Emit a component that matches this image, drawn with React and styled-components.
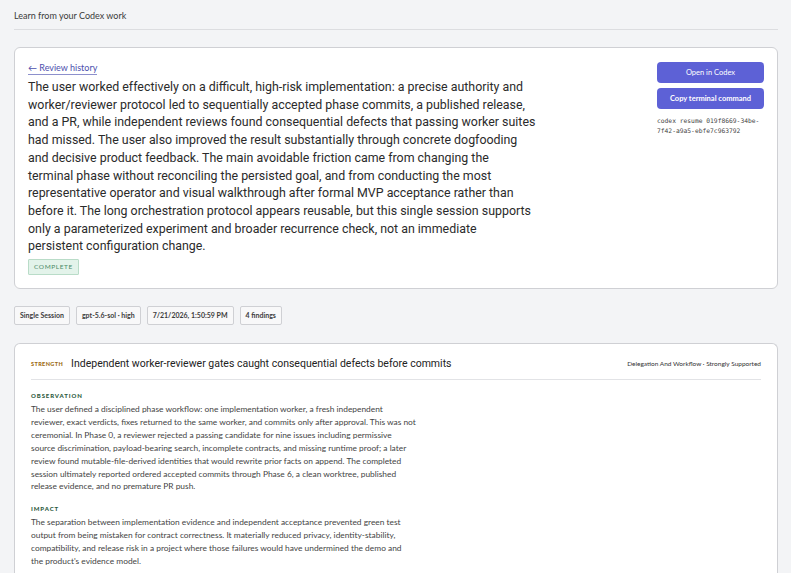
import React from 'react';
import styled, { createGlobalStyle } from 'styled-components';

const GlobalStyle = createGlobalStyle`
  html, body {
    margin: 0;
    padding: 0;
    background: #f3f4f6;
  }
  body {
    font-family: Lato, 'Noto Sans', sans-serif;
    color: #333;
  }
`;

const summaryLines = [
  'The user worked effectively on a difficult, high-risk implementation: a precise authority and',
  'worker/reviewer protocol led to sequentially accepted phase commits, a published release,',
  'and a PR, while independent reviews found consequential defects that passing worker suites',
  'had missed. The user also improved the result substantially through concrete dogfooding',
  'and decisive product feedback. The main avoidable friction came from changing the',
  'terminal phase without reconciling the persisted goal, and from conducting the most',
  'representative operator and visual walkthrough after formal MVP acceptance rather than',
  'before it. The long orchestration protocol appears reusable, but this single session supports',
  'only a parameterized experiment and broader recurrence check, not an immediate',
  'persistent configuration change.',
];

const observationLines = [
  'The user defined a disciplined phase workflow: one implementation worker, a fresh independent',
  'reviewer, exact verdicts, fixes returned to the same worker, and commits only after approval. This was not',
  'ceremonial. In Phase 0, a reviewer rejected a passing candidate for nine issues including permissive',
  'source discrimination, payload-bearing search, incomplete contracts, and missing runtime proof; a later',
  'review found mutable-file-derived identities that would rewrite prior facts on append. The completed',
  'session ultimately reported ordered accepted commits through Phase 6, a clean worktree, published',
  'release evidence, and no premature PR push.',
];

const impactLines = [
  'The separation between implementation evidence and independent acceptance prevented green test',
  'output from being mistaken for contract correctness. It materially reduced privacy, identity-stability,',
  'compatibility, and release risk in a project where those failures would have undermined the demo and',
  "the product's evidence model.",
];

const tags = ['Single Session', 'gpt-5.6-sol · high', '7/21/2026, 1:50:59 PM', '4 findings'];

const Page = styled.div`
  padding: 8px 13px 0 14px;
`;

const PageHeader = styled.div`
  font-size: 9px;
  line-height: 13px;
  color: #3a3a3a;
  padding: 1px 0 7px;
  border-bottom: 1px solid #dcdde0;
  margin-bottom: 17px;
`;

const Card = styled.section`
  background: #fff;
  border: 1px solid #cfd0d4;
  border-radius: 6px;
`;

const SummaryCard = styled(Card)`
  display: flex;
  justify-content: space-between;
  padding: 14px 13px 13px 13px;
`;

const SummaryMain = styled.div`
  display: flex;
  flex-direction: column;
  align-items: flex-start;
`;

const BackLink = styled.a`
  font-size: 9px;
  color: #4c50ad;
  text-decoration: none;
  border-bottom: 1px solid #8d90cc;
  line-height: 12px;
`;

const SummaryText = styled.p`
  margin: 3px 0 4px;
  font-family: Roboto, 'Noto Sans', sans-serif;
  font-size: 12.4px;
  line-height: 17.7px;
  color: #2b2b2b;
`;

const Line = styled.span`
  display: block;
  white-space: nowrap;
`;

const StatusBadge = styled.span`
  font-size: 6.5px;
  letter-spacing: 0.6px;
  color: #4b8a66;
  background: #e3f3ea;
  border: 1px solid #b9dcc8;
  padding: 3px 5px;
  line-height: 8px;
  border-radius: 1px;
`;

const SideActions = styled.div`
  width: 107px;
  display: flex;
  flex-direction: column;
  gap: 5px;
`;

const ActionButton = styled.button`
  height: 21px;
  border: none;
  border-radius: 4px;
  background: #5d61d6;
  color: #fff;
  font-family: Lato, sans-serif;
  font-size: 7.5px;
  font-weight: ${p => (p.$strong ? 700 : 400)};
  cursor: pointer;
`;

const ResumeCommand = styled.code`
  font-family: 'DejaVu Sans Mono', monospace;
  font-size: 6.3px;
  line-height: 10px;
  color: #444;
  margin-top: 2px;
`;

const TagRow = styled.div`
  display: flex;
  gap: 6px;
  margin: 17px 0 18px;
`;

const Tag = styled.span`
  font-size: 7px;
  font-weight: 700;
  color: #3c3c3c;
  background: #f8f8f9;
  border: 1px solid #cfd0d4;
  border-radius: 2px;
  padding: 0 5px;
  height: 17px;
  line-height: 17px;
`;

const FindingCard = styled(Card)`
  padding: 13px 16px 0 16px;
  border-bottom: none;
  border-radius: 6px 6px 0 0;
  min-height: 240px;
`;

const FindingHeader = styled.div`
  display: flex;
  align-items: center;
  gap: 8px;
  padding-bottom: 9px;
  border-bottom: 1px solid #e2e3e6;
`;

const Kind = styled.span`
  font-size: 5.5px;
  font-weight: 900;
  letter-spacing: 0.4px;
  color: #9c6a12;
  text-transform: uppercase;
`;

const FindingTitle = styled.h2`
  margin: 0;
  flex: 1;
  font-family: Roboto, 'Noto Sans', sans-serif;
  font-size: 10.5px;
  font-weight: 400;
  color: #222;
`;

const Meta = styled.span`
  font-size: 6.5px;
  color: #333;
`;

const Section = styled.div`
  margin-top: ${p => p.$gap || 10}px;
`;

const SectionLabel = styled.div`
  font-size: 6px;
  font-weight: 900;
  letter-spacing: 0.9px;
  color: #2d5a3e;
  text-transform: uppercase;
  margin-bottom: 4px;
`;

const Body = styled.p`
  margin: 0;
  font-size: 8.4px;
  line-height: 12.9px;
  color: #444;
`;

const Lines = ({ items }) => items.map(text => <Line key={text}>{text}</Line>);

export default function App() {
  return (
    <>
      <GlobalStyle />
      <Page>
        <PageHeader>Learn from your Codex work</PageHeader>

        <SummaryCard>
          <SummaryMain>
            <BackLink href="#">← Review history</BackLink>
            <SummaryText>
              <Lines items={summaryLines} />
            </SummaryText>
            <StatusBadge>COMPLETE</StatusBadge>
          </SummaryMain>
          <SideActions>
            <ActionButton>Open in Codex</ActionButton>
            <ActionButton $strong>Copy terminal command</ActionButton>
            <ResumeCommand>
              codex resume 019f8669-34be-
              <br />
              7f42-a9a5-ebfe7c963792
            </ResumeCommand>
          </SideActions>
        </SummaryCard>

        <TagRow>
          {tags.map(t => (
            <Tag key={t}>{t}</Tag>
          ))}
        </TagRow>

        <FindingCard>
          <FindingHeader>
            <Kind>Strength</Kind>
            <FindingTitle>Independent worker-reviewer gates caught consequential defects before commits</FindingTitle>
            <Meta>Delegation And Workflow · Strongly Supported</Meta>
          </FindingHeader>

          <Section $gap={12}>
            <SectionLabel>Observation</SectionLabel>
            <Body>
              <Lines items={observationLines} />
            </Body>
          </Section>

          <Section $gap={12}>
            <SectionLabel>Impact</SectionLabel>
            <Body>
              <Lines items={impactLines} />
            </Body>
          </Section>
        </FindingCard>
      </Page>
    </>
  );
}
